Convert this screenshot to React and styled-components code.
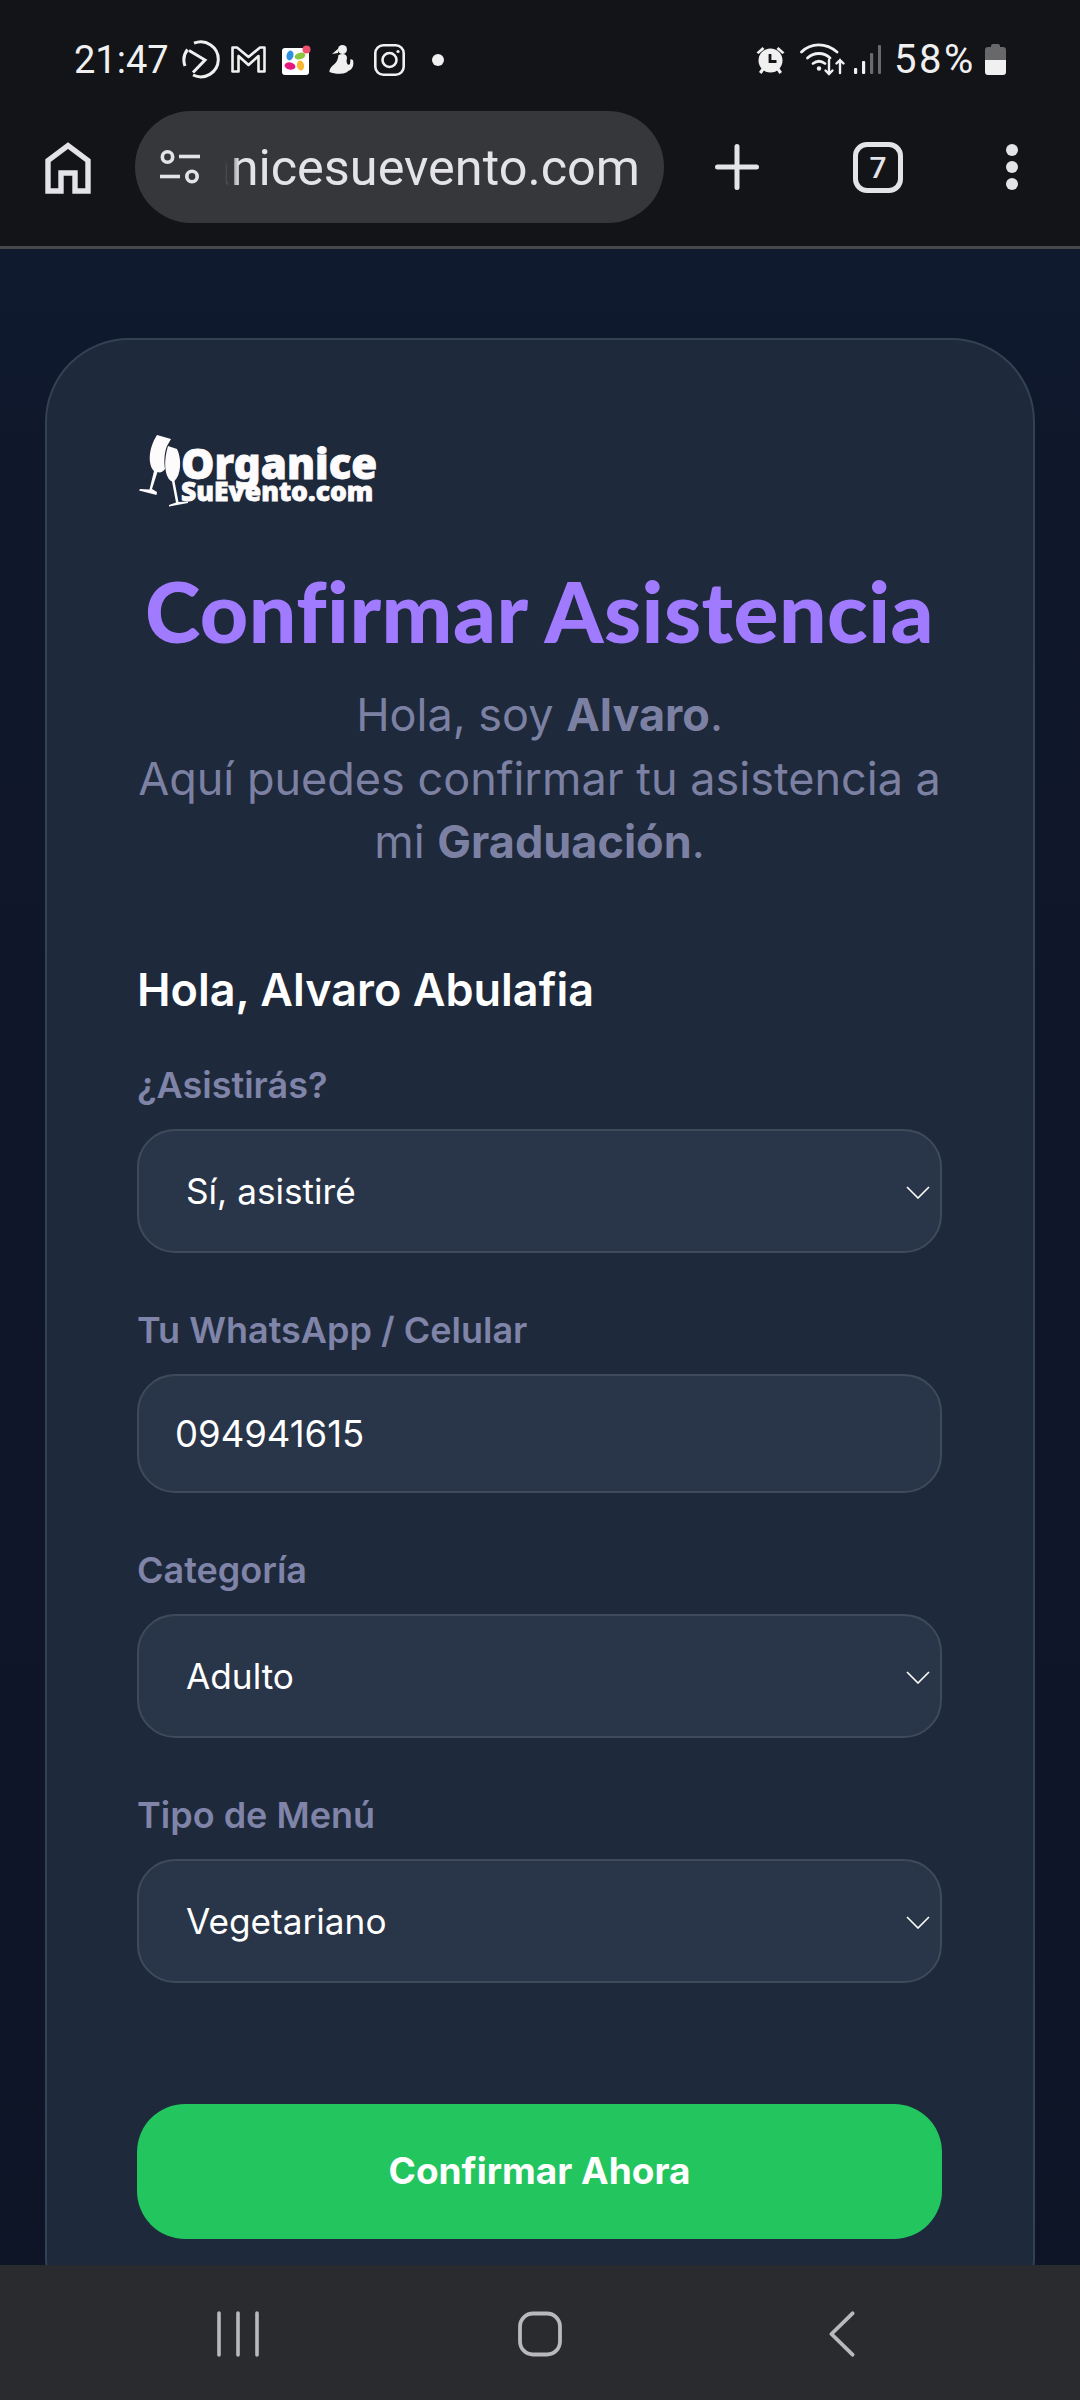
import styled, { createGlobalStyle } from "styled-components";

const GlobalStyle = createGlobalStyle`
* { box-sizing: border-box; }
html, body { margin: 0; padding: 0; background: #0f172a; }
`;

export default function App() {
    return (
        <>
            <GlobalStyle />
            <Screen>
                <StatusBar>
                    <StatusGroup>
                        <Clock>21:47</Clock>
                        <StatusIcon $w={39} $h={39} $gap={14} viewBox="0 0 39 39" fill="none" stroke="#f0f0f0" strokeWidth="3">
                            <path d="M12 3.2 A17.5 17.5 0 1 1 11 35" />
                            <path d="M5.5 9.5 A17.5 17.5 0 0 0 3 26" />
                            <path d="M7 10.5 L23 20 L11 32.5" />
                        </StatusIcon>
                        <StatusIcon $w={35} $h={27} $gap={10} viewBox="0 0 35 27" fill="none" stroke="#f0f0f0" strokeWidth="2.6" strokeLinejoin="round">
                            <path d="M1.5 25.5 V1.5 H6 L17.5 11 L29 1.5 H33.5 V25.5 H27.5 V10 L17.5 19 L7.5 10 V25.5 Z" />
                        </StatusIcon>
                        <StatusIcon $w={29} $h={30} $gap={16} viewBox="0 0 29 30">
                            <rect x="0" y="3" width="27" height="27" rx="3" fill="#fff" />
                            <ellipse cx="8" cy="10.5" rx="3.4" ry="5" fill="#2f8fe0" transform="rotate(15 8 10.5)" />
                            <ellipse cx="18" cy="11" rx="5.5" ry="3.2" fill="#8cc63f" transform="rotate(-15 18 11)" />
                            <ellipse cx="8" cy="21" rx="5.5" ry="3.6" fill="#e6177f" transform="rotate(12 8 21)" />
                            <ellipse cx="18.5" cy="20.5" rx="3.6" ry="5" fill="#f7b733" transform="rotate(-8 18.5 20.5)" />
                            <circle cx="24.5" cy="4.5" r="4" fill="#f0506e" />
                        </StatusIcon>
                        <StatusIcon $w={25} $h={29} $gap={18} viewBox="0 0 25 29" fill="#f0f0f0">
                            <circle cx="13.5" cy="4.5" r="4.5" />
                            <path d="M10 3 L3 9 L9 8 Z" />
                            <path d="M9.5 10 C14 8 18 9 18 13 L17.5 16 C18 19 19 21 21 19 L21.5 14 L24 15 C25.5 22 22 25 19 26 C17 29.5 6 29.5 0.5 27 C0 24 3 21 5.5 19 C8 17 9 14 9.5 10 Z" />
                        </StatusIcon>
                        <StatusIcon $w={31} $h={32} $gap={20} viewBox="0 0 31 32" fill="none" stroke="#f0f0f0" strokeWidth="2.6">
                            <rect x="1.3" y="1.3" width="28.4" height="29.4" rx="8" />
                            <circle cx="15.5" cy="16" r="7" />
                            <circle cx="24" cy="7.5" r="1.6" fill="#f0f0f0" stroke="none" />
                        </StatusIcon>
                        <StatusDot />
                    </StatusGroup>
                    <StatusGroup>
                        <StatusIcon $w={29} $h={28} $gap={0} viewBox="0 0 29 28" fill="#f0f0f0">
                            <circle cx="14.5" cy="14.5" r="12" />
                            <path d="M0.5 6.5 L6.5 1 L8.5 3 L2.5 8 Z M28.5 6.5 L22.5 1 L20.5 3 L26.5 8 Z M3 26 L6.5 21 L9 23 L5.5 28 Z M26 26 L22.5 21 L20 23 L23.5 28 Z" />
                            <path d="M14 8 V15.5 H20.5" fill="none" stroke="#131418" strokeWidth="2.8" />
                        </StatusIcon>
                        <StatusIcon $w={45} $h={33} $gap={15} viewBox="0 0 45 33" fill="none" stroke="#f0f0f0" strokeWidth="2.8" strokeLinecap="round">
                            <path d="M1.5 9 C11 -0.5 26 -0.5 37 9" />
                            <path d="M7.5 15 C14 9 24 9 30 15" />
                            <path d="M13 20.5 C17 17.5 21 17.5 25 20.5" />
                            <circle cx="19" cy="25.5" r="2.2" fill="#f0f0f0" stroke="none" />
                            <path d="M29 17 V31 M25.5 27.5 L29 31 L32.5 27.5" strokeWidth="2.4" />
                            <path d="M40 30 V17 M36.5 20.5 L40 17 L43.5 20.5" strokeWidth="2.4" />
                        </StatusIcon>
                        <StatusIcon $w={27} $h={29} $gap={9} viewBox="0 0 27 29">
                            <rect x="0" y="23" width="3.2" height="6" rx="1" fill="#f0f0f0" />
                            <rect x="8" y="16" width="3.2" height="13" rx="1" fill="#f0f0f0" />
                            <rect x="16" y="8" width="3.2" height="21" rx="1" fill="#6a6a6c" />
                            <rect x="24" y="0" width="3" height="29" rx="1" fill="#6a6a6c" />
                        </StatusIcon>
                        <BatteryText>58%</BatteryText>
                        <StatusIcon $w={21} $h={31} $gap={7} viewBox="0 0 21 31">
                            <path d="M6 3 V2 Q6 0 8 0 H13 Q15 0 15 2 V3 H18 Q21 3 21 6 V16 H0 V6 Q0 3 3 3 Z" fill="#68686b" />
                            <path d="M0 16 H21 V28 Q21 31 18 31 H3 Q0 31 0 28 Z" fill="#f0f0f0" />
                        </StatusIcon>
                    </StatusGroup>
                </StatusBar>

                <Toolbar>
                    <HomeIcon viewBox="0 0 46 52" fill="none" stroke="#e3e3e8" strokeWidth="5.4">
                        <path d="M3 49 V18.5 L23 3.5 L43 18.5 V49 H30 V31 H16 V49 Z" />
                    </HomeIcon>
                    <UrlPill>
                        <SettingsIcon viewBox="0 0 42 34" fill="none" stroke="#e3e3e8" strokeWidth="3.6">
                            <circle cx="8.5" cy="7" r="5.2" />
                            <path d="M20 6.5 H41" />
                            <path d="M1 26.5 H21" />
                            <circle cx="33" cy="26.5" r="5.2" />
                        </SettingsIcon>
                        <UrlClip>
                            <UrlText>organicesuevento.com</UrlText>
                        </UrlClip>
                    </UrlPill>
                    <PlusIcon viewBox="0 0 44 46" fill="none" stroke="#e3e3e8" strokeWidth="5" strokeLinecap="round">
                        <path d="M22 2.5 V43.5 M2.5 23 H41.5" />
                    </PlusIcon>
                    <TabCount>7</TabCount>
                    <MoreDots>
                        <span /><span /><span />
                    </MoreDots>
                </Toolbar>

                <Main>
                    <Card>
                        <Logo>
                            <GlassesIcon viewBox="0 0 50 72" fill="#fdfbfc">
                                <path d="M18 0 L32 4 L28 11 C25 18 25 28 26 34 C24 37 21 38 18.5 37 L13 54 L18 57 L17.5 60 L0 55.5 L1 54 L10.5 54.5 L15 36 C9 30 9 14 18 0 Z" />
                                <path d="M29 11 L38 14 C43 24 42 40 35.5 46 L39.5 67 L49 66.5 L49 68 L30 71.5 L30 70 L37 67.5 L33 46.5 C26 43 24 28 29 11 Z" />
                            </GlassesIcon>
                            <LogoWords>
                                <LogoTop>Organice</LogoTop>
                                <LogoBottom>SuEvento.com</LogoBottom>
                            </LogoWords>
                        </Logo>
                        <Title>Confirmar Asistencia</Title>
                        <Intro>
                            Hola, soy <strong>Alvaro</strong>.<br />
                            Aquí puedes confirmar tu asistencia a mi <strong>Graduación</strong>.
                        </Intro>
                        <Greeting>Hola, Alvaro Abulafia</Greeting>
                        <Form>
                            <Field>
                                <Label>¿Asistirás?</Label>
                                <SelectBox options={["Sí, asistiré", "No podré ir"]} />
                            </Field>
                            <Field>
                                <Label>Tu WhatsApp / Celular</Label>
                                <TextInput type="text" defaultValue="094941615" />
                            </Field>
                            <Field>
                                <Label>Categoría</Label>
                                <SelectBox options={["Adulto", "Niño"]} />
                            </Field>
                            <Field>
                                <Label>Tipo de Menú</Label>
                                <SelectBox options={["Vegetariano", "Común"]} />
                            </Field>
                            <SubmitButton type="button">Confirmar Ahora</SubmitButton>
                        </Form>
                    </Card>
                </Main>

                <NavBar>
                    <NavIcon $w={44} viewBox="0 0 44 46" fill="none" stroke="#b9b9bb" strokeWidth="3.6" strokeLinecap="round">
                        <path d="M3 2 V44 M22 2 V44 M41 2 V44" />
                    </NavIcon>
                    <NavIcon $w={46} viewBox="0 0 46 46" fill="none" stroke="#b9b9bb" strokeWidth="3.8">
                        <rect x="3" y="2.5" width="40" height="41" rx="13" />
                    </NavIcon>
                    <NavIcon $w={28} viewBox="0 0 28 48" fill="none" stroke="#b9b9bb" strokeWidth="4" strokeLinecap="round" strokeLinejoin="round">
                        <path d="M25 2.5 L3 24 L25 45.5" />
                    </NavIcon>
                </NavBar>
            </Screen>
        </>
    );
}

function SelectBox({ options }) {
    return (
        <SelectWrap>
            <Select>
                {options.map((o) => <option key={o}>{o}</option>)}
            </Select>
            <Chevron viewBox="0 0 24 13" fill="none" stroke="#fff" strokeWidth="1.6">
                <path d="M1 1 L12 12 L23 1" />
            </Chevron>
        </SelectWrap>
    );
}

const Screen = styled.div`
width: 1080px;
height: 2400px;
display: flex;
flex-direction: column;
overflow: hidden;
font-family: Inter, "Liberation Sans", sans-serif;
`

const StatusBar = styled.div`
height: 110px;
background: #131418;
display: flex;
align-items: center;
justify-content: space-between;
padding: 9px 74px 0 75px;
flex-shrink: 0;
`
const StatusGroup = styled.div`
display: flex;
align-items: center;
`
const Clock = styled.span`
font-family: Roboto, sans-serif;
font-size: 38px;
color: #f0f0f0;
width: 94px;
margin-left: -1px;
padding-right: 1px;
`
const StatusIcon = styled.svg`
width: ${(p) => p.$w}px;
height: ${(p) => p.$h}px;
margin-left: ${(p) => p.$gap}px;
flex-shrink: 0;
`
const StatusDot = styled.i`
width: 12px;
height: 12px;
border-radius: 50%;
background: #f0f0f0;
margin-left: 27px;
`
const BatteryText = styled.span`
font-family: Roboto, sans-serif;
font-size: 40px;
letter-spacing: 2.5px;
color: #f0f0f0;
margin: 0 2px 0 13px;
width: 82px;
white-space: nowrap;
`

const Toolbar = styled.div`
height: 139px;
background: #131418;
border-bottom: 3px solid #46484b;
display: flex;
align-items: flex-start;
flex-shrink: 0;
padding: 1px 0 0 45px;
`
const HomeIcon = styled.svg`
width: 46px;
height: 52px;
margin-top: 31px;
flex-shrink: 0;
`
const UrlPill = styled.div`
width: 529px;
height: 112px;
margin-left: 44px;
border-radius: 56px;
background: #36373b;
display: flex;
align-items: center;
padding: 0 24px;
flex-shrink: 0;
`
const SettingsIcon = styled.svg`
width: 42px;
height: 34px;
flex-shrink: 0;
`
const UrlClip = styled.div`
flex: 1;
min-width: 0;
overflow: hidden;
display: flex;
justify-content: flex-end;
margin: 2px 0 0 24px;
mask-image: linear-gradient(90deg, transparent 0, #000 14px);
`
const UrlText = styled.span`
font-family: Roboto, sans-serif;
font-size: 50.4px;
line-height: 60px;
color: #e3e3e8;
white-space: nowrap;
`
const PlusIcon = styled.svg`
width: 44px;
height: 46px;
margin: 33px 0 0 51px;
flex-shrink: 0;
`
const TabCount = styled.div`
width: 50px;
height: 51px;
margin: 31px 0 0 94px;
border: 5px solid #e3e3e8;
border-radius: 14px;
display: flex;
align-items: center;
justify-content: center;
color: #e3e3e8;
font-family: Roboto, sans-serif;
font-size: 30px;
font-weight: 500;
flex-shrink: 0;
`
const MoreDots = styled.div`
display: flex;
flex-direction: column;
gap: 5px;
margin: 33px 0 0 103px;
span{
    width: 12px;
    height: 12px;
    border-radius: 50%;
    background: #e3e3e8;
}
`

const Main = styled.main`
flex: 1;
min-height: 0;
overflow: hidden;
padding: 89px 45px 0;
background: linear-gradient(180deg, #0f1a2f 0, #0f172a 260px, #0e1527 100%);
`
const Card = styled.section`
width: 990px;
background: #1e293b;
border: 2px solid #334155;
border-radius: 84px;
padding: 95px 91px 100px 90px;
`
const Logo = styled.div`
display: flex;
height: 72px;
margin-left: 2px;
`
const GlassesIcon = styled.svg`
width: 50px;
height: 72px;
flex-shrink: 0;
`
const LogoWords = styled.div`
display: flex;
flex-direction: column;
margin-left: -8px;
color: #fdfbfc;
font-family: "Noto Sans", sans-serif;
font-weight: 900;
white-space: nowrap;
-webkit-text-stroke: 0.8px #fdfbfc;
`
const LogoTop = styled.span`
font-size: 42px;
line-height: 46px;
margin-top: 5px;
`
const LogoBottom = styled.span`
font-size: 26.5px;
line-height: 20px;
margin-top: -5px;
`
const Title = styled.h1`
margin: 56px 0 0;
font-family: Lato, sans-serif;
font-weight: 900;
font-size: 84px;
letter-spacing: 0.5px;
line-height: 96px;
color: #a07bff;
text-align: center;
white-space: nowrap;
`
const Intro = styled.p`
margin: 24px 0 0;
font-size: 45px;
line-height: 63.5px;
color: #7c81a3;
text-align: center;
strong{
    font-weight: 700;
    color: #7c81a3;
}
`
const Greeting = styled.h2`
margin: 89.5px 0 0;
font-size: 45px;
line-height: 54px;
font-weight: 600;
color: #fff;
`
const Form = styled.form`
margin-top: 42px;
display: flex;
flex-direction: column;
gap: 51px;
`
const Field = styled.div`
display: flex;
flex-direction: column;
gap: 18px;
`
const Label = styled.label`
font-size: 36px;
line-height: 52px;
font-weight: 600;
color: #7f84a8;
`
const SelectWrap = styled.div`
position: relative;
`
const Select = styled.select`
width: 100%;
height: 124px;
appearance: none;
background: #293548;
border: 2px solid #3f4a5b;
border-radius: 38px;
padding: 0 47px;
color: #fff;
font-family: inherit;
font-size: 35.2px;
`
const Chevron = styled.svg`
position: absolute;
right: 12px;
top: 57px;
width: 24px;
height: 13px;
pointer-events: none;
`
const TextInput = styled.input`
width: 100%;
height: 119px;
background: #293548;
border: 2px solid #3f4a5b;
border-radius: 38px;
padding: 0 36px;
color: #fff;
font-family: inherit;
font-size: 36.5px;
`
const SubmitButton = styled.button`
margin-top: 70px;
height: 135px;
border: none;
border-radius: 48px;
background: #22c55e;
color: #fff;
font-family: inherit;
font-size: 37px;
font-weight: 700;
padding-bottom: 3px;
`

const NavBar = styled.nav`
height: 135px;
background: #2a2b2e;
display: grid;
grid-template-columns: repeat(3, 302px);
justify-content: center;
justify-items: center;
align-items: start;
padding-top: 46px;
flex-shrink: 0;
`
const NavIcon = styled.svg`
width: ${(p) => p.$w}px;
height: 46px;
`
